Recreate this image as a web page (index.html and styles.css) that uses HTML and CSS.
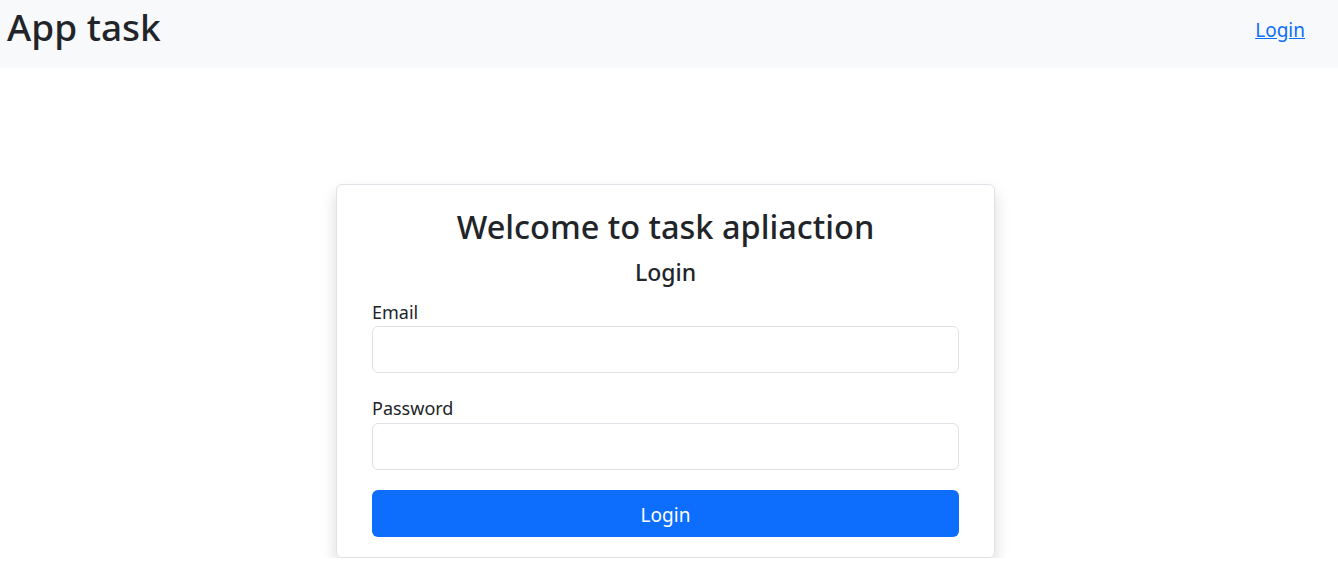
FILE: index.html
```html
<!DOCTYPE html>
<html lang="en">
<head>
<meta charset="utf-8">
<title>App task</title>
<link rel="stylesheet" href="styles.css">
</head>
<body>
<nav class="navbar">
  <span class="brand">App task</span>
  <a class="nav-link" href="#">Login</a>
</nav>
<main class="page">
  <div class="card">
    <h2 class="title">Welcome to task apliaction</h2>
    <h4 class="subtitle">Login</h4>
    <form class="form">
      <div class="field">
        <label class="label" for="email">Email</label>
        <input class="input" id="email" type="email">
      </div>
      <div class="field">
        <label class="label" for="password">Password</label>
        <input class="input" id="password" type="password">
      </div>
      <button class="btn" type="button">Login</button>
    </form>
  </div>
</main>
</body>
</html>
```
FILE: styles.css
```css
* { box-sizing: border-box; }
html, body { margin: 0; padding: 0; }
body {
  font-family: "Noto Sans", "Open Sans", sans-serif;
  color: #212529;
  background: #fff;
  font-size: 16px;
}
.navbar {
  height: 68px;
  background: #f8f9fa;
  display: flex;
  align-items: center;
  justify-content: space-between;
  padding: 0 33px 0 7px;
}
.brand {
  font-size: 37px;
  font-weight: 500;
  line-height: 1.2;
  margin-top: -14px;
}
.nav-link {
  color: #0d6efd;
  font-size: 19px;
  text-decoration: underline;
  margin-top: -8px;
}
.page {
  display: flex;
  justify-content: center;
  padding: 116px 7px 0 0;
}
.card {
  width: 659px;
  border: 1px solid #dee2e6;
  border-radius: 6px;
  box-shadow: 0 8px 16px rgba(0,0,0,0.15);
  padding: 22px 35px 20px 35px;
  display: flex;
  flex-direction: column;
}
.title {
  margin: 0;
  text-align: center;
  font-size: 32.5px;
  font-weight: 500;
  line-height: 1.2;
}
.subtitle {
  margin: 13px 0 0;
  text-align: center;
  font-size: 23px;
  font-weight: 500;
  line-height: 1.2;
}
.form {
  display: flex;
  flex-direction: column;
  margin-top: 15px;
}
.field {
  display: flex;
  flex-direction: column;
  margin-bottom: 25px;
}
.field:last-of-type {
  margin-bottom: 20px;
}
.label {
  font-size: 18px;
  line-height: 1.2;
  margin-bottom: 3px;
}
.input {
  height: 47px;
  border: 1px solid #dee2e6;
  border-radius: 6px;
  font-size: 20px;
  padding: 8px 16px;
  background: #fff;
}
.btn {
  height: 47px;
  border: none;
  border-radius: 6px;
  background: #0d6efd;
  color: #fff;
  font-family: inherit;
  font-size: 19px;
  padding: 4px 0 0;
}
```
